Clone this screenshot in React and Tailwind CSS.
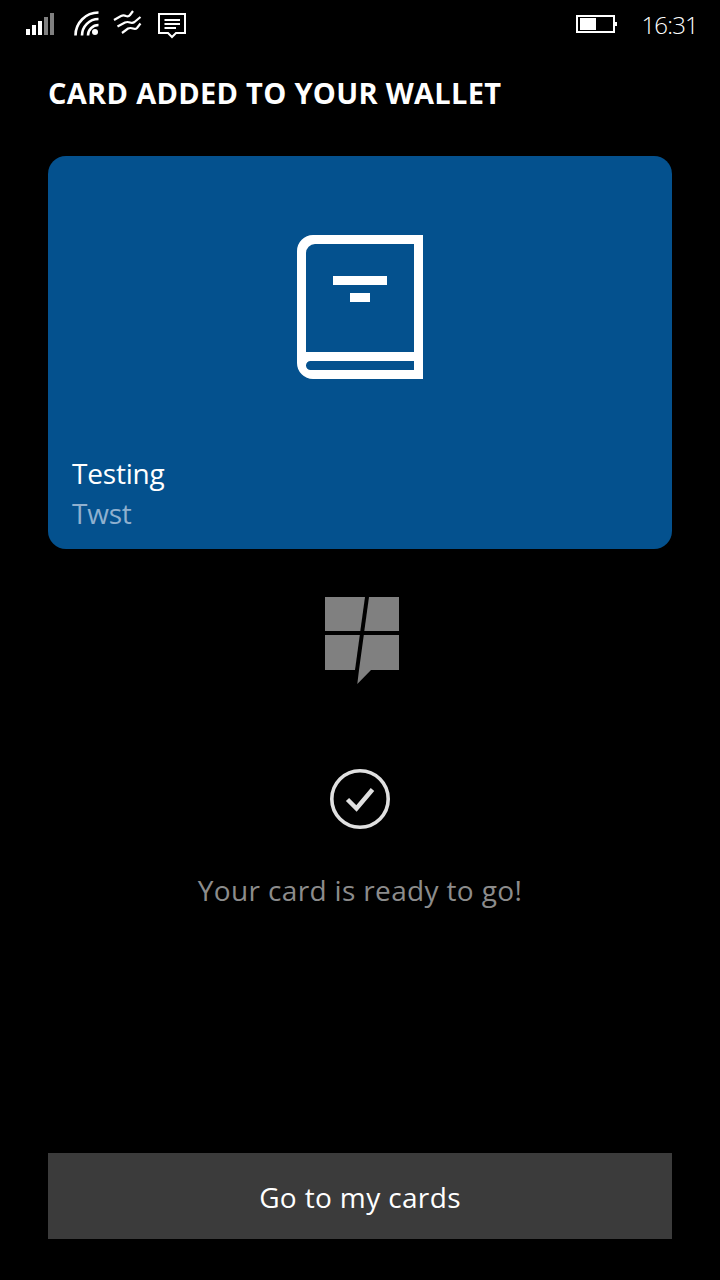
export default function App() {
  return (
    <div className="w-[720px] h-[1280px] bg-black text-white flex flex-col font-['Open_Sans','Noto_Sans',sans-serif]">
      <div className="h-[50px] flex items-start">
        <svg className="ml-[26px] mt-[13px] w-[28px] h-[22px]" viewBox="0 0 28 22">
          <rect x="0" y="16" width="4" height="6" fill="#fff" />
          <rect x="6" y="12" width="4" height="10" fill="#fff" />
          <rect x="12" y="8" width="4" height="14" fill="#fff" />
          <rect x="18" y="4" width="4" height="18" fill="#808080" />
          <rect x="24" y="0" width="4" height="22" fill="#808080" />
        </svg>
        <svg className="ml-[20px] mt-[10px] w-[26px] h-[27px]" viewBox="0 0 26 27" fill="none" stroke="#fff" strokeWidth="2.6">
          <path d="M1.5 25.5A23 23 0 0 1 24.5 2.5" />
          <path d="M8 25.5A16.5 16.5 0 0 1 24.5 9" />
          <path d="M14 25.5A10.5 10.5 0 0 1 24.5 15" />
          <circle cx="21" cy="22" r="3" fill="#fff" stroke="none" />
        </svg>
        <svg className="ml-[13px] mt-[9px] w-[30px] h-[26px]" viewBox="0 0 30 26" fill="none" stroke="#fff" strokeWidth="2.2">
          <path d="M1 11L8 7Q10.5 5.8 13 7Q15.5 8 17 6L20 2" />
          <path d="M4.5 17.5L12 13.5Q14.5 12.5 17 13.5Q19.5 14.5 21.5 13L27.5 8" />
          <path d="M9 24L15 19.5Q17.5 18.5 20 19.5Q22.5 20.5 24 19L27.5 14.5" />
        </svg>
        <svg className="ml-[15px] mt-[13px] w-[28px] h-[26px]" viewBox="0 0 28 26" fill="none" stroke="#fff" strokeWidth="2">
          <path d="M1 1H27V20H18L14 24L10 20H1Z" />
          <path d="M6.5 7H22M6.5 11H22M6.5 15H18" />
        </svg>
        <svg className="ml-auto mt-[15px] w-[42px] h-[18px]" viewBox="0 0 42 18">
          <rect x="1" y="1" width="37" height="16" fill="none" stroke="#fff" strokeWidth="2" />
          <rect x="4" y="3" width="16" height="12" fill="#fff" />
          <rect x="39" y="7" width="2" height="4" fill="#fff" />
        </svg>
        <span className="ml-[23px] mr-[22px] mt-[8px] text-[24px] leading-[34px] font-light tracking-[-0.8px]">16:31</span>
      </div>

      <h1 className="mt-[26px] mx-[48px] h-[34px] text-[29px] leading-[34px] font-bold tracking-[0.3px] whitespace-nowrap">CARD ADDED TO YOUR WALLET</h1>

      <div className="mt-[46px] mx-[48px] h-[393px] rounded-[18px] bg-[#04518e] flex flex-col">
        <svg className="mt-[79px] self-center w-[126px] h-[144px]" viewBox="0 0 126 144" fill="#fff">
          <path fillRule="evenodd" d="M16 0H126V144H16A16 16 0 0 1 0 128V16A16 16 0 0 1 16 0ZM18 9A9 9 0 0 0 9 18V117H117V9ZM13.5 126A4.5 4.5 0 0 0 13.5 135H117V126Z" />
          <rect x="36" y="41" width="54" height="9" />
          <rect x="53" y="58" width="20" height="9" />
        </svg>
        <div className="mt-auto mb-[16px] mx-[24px]">
          <div className="text-[28px] leading-[40px] font-normal tracking-[-0.2px]">Testing</div>
          <div className="text-[28px] leading-[40px] font-normal tracking-[-0.2px] text-[#8fb0cf]">Twst</div>
        </div>
      </div>

      <svg className="mt-[48px] ml-[325px] self-start w-[74px] h-[87px]" viewBox="0 0 74 87" fill="#808080">
        <polygon points="0,0 40,0 35.3,34 0,34" />
        <polygon points="44,0 74,0 74,34 39.3,34" />
        <polygon points="0,38 34.8,38 30,73 0,73" />
        <polygon points="38.8,38 74,38 74,73 46,73 32.3,87 34,73" />
      </svg>

      <svg className="mt-[85px] self-center w-[60px] h-[60px]" viewBox="0 0 60 60" fill="none" stroke="#e0e0e0">
        <circle cx="30" cy="30" r="28.2" strokeWidth="3.6" />
        <path d="M17.5 30.5L26.5 39.5L42.5 20.5" strokeWidth="4.5" />
      </svg>

      <p className="mt-[41px] text-center text-[28px] leading-[40px] font-normal tracking-[0.35px] text-[#8c8c8c]">Your card is ready to go!</p>

      <button className="mt-auto mb-[41px] mx-[48px] h-[86px] bg-[#3b3b3b] text-[28px] pt-[2px] font-normal tracking-[0.36px] text-white">Go to my cards</button>
    </div>
  );
}
